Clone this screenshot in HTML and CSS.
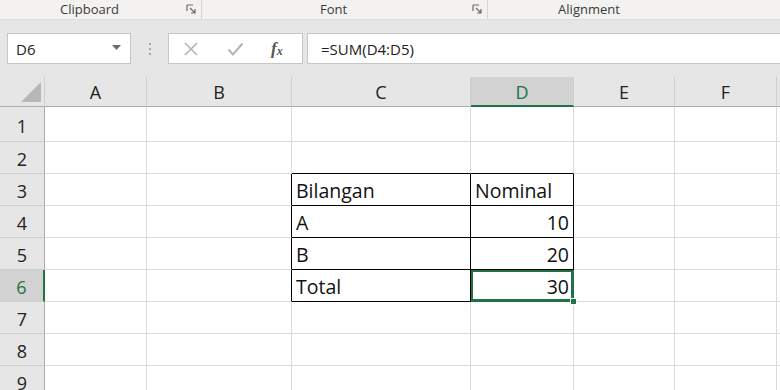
FILE: index.html
```html
<!DOCTYPE html>
<html>
<head>
<meta charset="utf-8">
<link rel="stylesheet" href="styles.css">
</head>
<body>
<div class="app">
  <div class="ribbon">
    <div class="group g-clip"><span class="glabel">Clipboard</span><span class="launch"><svg width="11" height="11" viewBox="0 0 11 11"><path d="M1 1h6M1 1v6M4 4l5 5M9 5v4H5" fill="none" stroke="#6a6a6a" stroke-width="1.2"/></svg></span></div>
    <div class="group g-font"><span class="glabel">Font</span><span class="launch"><svg width="11" height="11" viewBox="0 0 11 11"><path d="M1 1h6M1 1v6M4 4l5 5M9 5v4H5" fill="none" stroke="#6a6a6a" stroke-width="1.2"/></svg></span></div>
    <div class="group g-align"><span class="glabel">Alignment</span></div>
  </div>
  <div class="fbar">
    <div class="namebox"><span>D6</span><svg class="caret" width="9" height="5" viewBox="0 0 9 5"><path d="M0 0h9L4.5 5z" fill="#6b6b6b"/></svg></div>
    <div class="dots"><i></i><i></i><i></i></div>
    <div class="fnbox">
      <svg width="16" height="16" viewBox="0 0 16 16"><path d="M2 2l12 12M14 2L2 14" stroke="#b4b4b4" stroke-width="1.6" fill="none"/></svg>
      <svg width="17" height="16" viewBox="0 0 17 16"><path d="M1.5 8.5l4.5 5L15.5 2.5" stroke="#b4b4b4" stroke-width="2" fill="none"/></svg>
      <span class="fx"><i>f</i><sub>x</sub></span>
    </div>
    <div class="formula">=SUM(D4:D5)</div>
  </div>
  <div class="sheet">
    <div class="corner"><span class="tri"></span></div>
    <div class="ch">A</div><div class="ch">B</div><div class="ch">C</div><div class="ch sel">D</div><div class="ch">E</div><div class="ch">F</div><div class="ch last"></div>

    <div class="rh r1">1</div><div class="c r1"></div><div class="c r1"></div><div class="c r1"></div><div class="c r1"></div><div class="c r1"></div><div class="c r1"></div><div class="c r1 last"></div>

    <div class="rh">2</div><div class="c"></div><div class="c"></div><div class="c tb-b"></div><div class="c tb-b"></div><div class="c"></div><div class="c"></div><div class="c last"></div>

    <div class="rh">3</div><div class="c"></div><div class="c tb-r"></div><div class="c t">Bilangan</div><div class="c t">Nominal</div><div class="c"></div><div class="c"></div><div class="c last"></div>

    <div class="rh">4</div><div class="c"></div><div class="c tb-r"></div><div class="c t">A</div><div class="c t num">10</div><div class="c"></div><div class="c"></div><div class="c last"></div>

    <div class="rh">5</div><div class="c"></div><div class="c tb-r"></div><div class="c t">B</div><div class="c t num">20</div><div class="c"></div><div class="c"></div><div class="c last"></div>

    <div class="rh rsel">6</div><div class="c"></div><div class="c tb-r"></div><div class="c t">Total</div><div class="c t num active">30<span class="handle"></span></div><div class="c"></div><div class="c"></div><div class="c last"></div>

    <div class="rh">7</div><div class="c"></div><div class="c"></div><div class="c"></div><div class="c"></div><div class="c"></div><div class="c"></div><div class="c last"></div>

    <div class="rh">8</div><div class="c"></div><div class="c"></div><div class="c"></div><div class="c"></div><div class="c"></div><div class="c"></div><div class="c last"></div>

    <div class="rh">9</div><div class="c"></div><div class="c"></div><div class="c"></div><div class="c"></div><div class="c"></div><div class="c"></div><div class="c last"></div>
  </div>
</div>
</body>
</html>
```

FILE: styles.css
```css
* { box-sizing: border-box; margin: 0; padding: 0; }
html, body { width: 780px; height: 390px; overflow: hidden; background: #fff; }
body { font-family: "Open Sans", "Noto Sans", sans-serif; color: #262626; }

.app { width: 780px; height: 390px; display: flex; flex-direction: column; background: #e6e6e6; }

.ribbon { height: 20px; background: #f3f2f1; display: flex; font-size: 13px; color: #3a3a3a; border-bottom: 1px solid #dcdcdc; box-shadow: 0 2px 3px rgba(0,0,0,0.06); }
.group { position: relative; display: flex; align-items: center; justify-content: center; height: 19px; border-right: 1px solid #d6d6d6; }
.g-clip { width: 202px; }
.g-font { width: 286px; }
.g-align { flex: 1; border-right: none; }
.glabel { line-height: 19px; margin-top: -1px; }
.g-clip .glabel { margin-left: -22px; }
.g-font .glabel { margin-left: -22px; }
.g-align .glabel { margin-left: -90px; }
.launch { position: absolute; right: 4px; top: 4px; width: 11px; height: 11px; display: flex; }

.fbar { height: 44px; display: flex; align-items: flex-start; padding-top: 13px; background: #e6e6e6; }
.namebox { margin-left: 7px; width: 124px; height: 31px; background: #fff; border: 1px solid #c6c6c6; display: flex; align-items: center; justify-content: space-between; padding: 0 9px 0 8px; font-size: 15px; color: #222; }
.caret { margin-top: -2px; }
.dots { width: 37px; height: 31px; display: flex; flex-direction: column; align-items: center; justify-content: center; gap: 3px; }
.dots i { display: block; width: 2px; height: 2px; background: #a8a8a8; }
.fnbox { width: 135px; height: 31px; background: #fff; border: 1px solid #c6c6c6; display: flex; align-items: center; padding-left: 14px; gap: 28px; }
.fx { font-family: "Liberation Serif", serif; font-size: 17px; color: #555; font-weight: bold; display: flex; align-items: baseline; margin-left: -1px; }
.fx i { font-style: italic; }
.fx sub { font-size: 12px; font-style: italic; vertical-align: baseline; position: relative; top: 1px; }
.formula { margin-left: 4px; flex: 1; height: 31px; background: #fff; border: 1px solid #c6c6c6; border-right: none; display: flex; align-items: center; padding-left: 13px; font-size: 15px; color: #222; }

.sheet { flex: 1; display: grid; grid-template-columns: 45px 102px 145px 179px 103px 101px 102px 3px; grid-template-rows: 30px 35px 32px 32px 32px 32px 32px 32px 32px 32px; margin-top: 13px; background: #fff; overflow: hidden; }

.corner { background: #e6e6e6; border-right: 1px solid #cfcfcf; border-bottom: 1px solid #ababab; position: relative; }
.tri { position: absolute; right: 3px; bottom: 4px; width: 0; height: 0; border-left: 20px solid transparent; border-bottom: 20px solid #b7b7b7; }

.ch { background: #e6e6e6; border-right: 1px solid #cfcfcf; border-bottom: 1px solid #ababab; display: flex; align-items: center; justify-content: center; font-size: 18px; color: #222; padding-top: 1px; }
.ch.sel { background: #d2d2d2; color: #217346; border-bottom: 2px solid #217346; }
.ch.last { border-right: none; }

.rh { background: #e6e6e6; border-right: 1px solid #ababab; border-bottom: 1px solid #cfcfcf; display: flex; align-items: center; justify-content: center; font-size: 18px; color: #222; padding-top: 2px; }
.rh.r1 { padding-top: 4px; }
.rh.rsel { background: #d2d2d2; color: #217346; border-right: 2px solid #217346; }

.c { border-right: 1px solid #dadada; border-bottom: 1px solid #dadada; font-size: 19.5px; color: #111; display: flex; align-items: center; padding: 2px 4px 0 4px; }
.c.last { border-right: none; }
.c.tb-b { border-bottom: 1px solid #000; }
.c.tb-r { border-right: 1px solid #000; }
.c.t { border-right: 1px solid #000; border-bottom: 1px solid #000; }
.c.num { justify-content: flex-end; padding-right: 4px; }
.c.active { position: relative; box-shadow: inset 0 0 0 2px #217346; border-right-color: #217346; border-bottom-color: #217346; }
.handle { position: absolute; right: -4px; bottom: -4px; width: 7px; height: 7px; background: #217346; border: 1px solid #fff; z-index: 2; }
```
